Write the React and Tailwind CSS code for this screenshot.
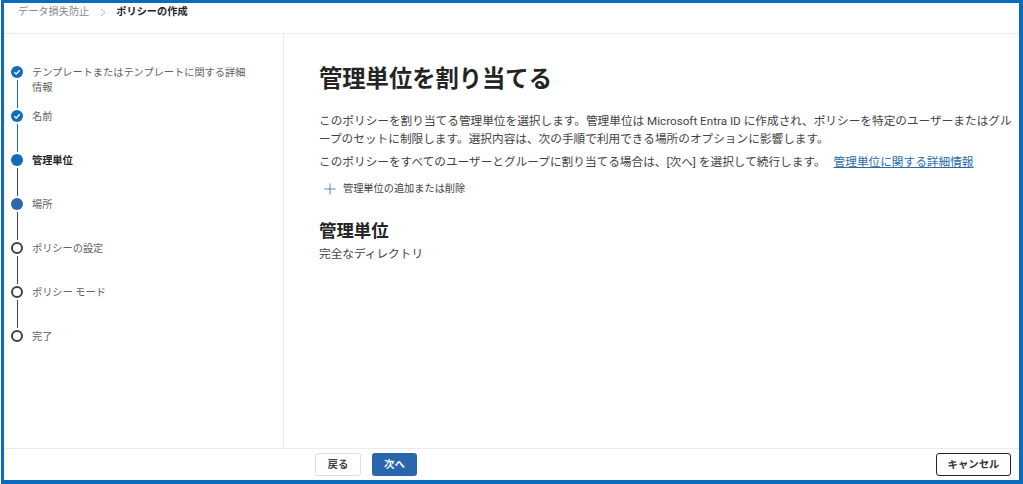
import React from 'react';
import { Plus } from 'lucide-react';

const font = "font-['Roboto','Noto_Sans_CJK_JP',sans-serif]";

const steps = [
  { label: 'テンプレートまたはテンプレートに関する詳細情報', state: 'done', line: 'blue' },
  { label: '名前', state: 'done', line: 'blue' },
  { label: '管理単位', state: 'current', line: 'dark' },
  { label: '場所', state: 'filled', line: 'dark' },
  { label: 'ポリシーの設定', state: 'todo', line: 'dark' },
  { label: 'ポリシー モード', state: 'todo', line: 'dark' },
  { label: '完了', state: 'todo' },
];

function StepDot({ state }) {
  if (state === 'done') {
    return (
      <span className="w-3 h-3 rounded-full bg-[#0f6cbd] flex items-center justify-center shrink-0">
        <svg width="8" height="8" viewBox="0 0 8 8" fill="none">
          <path d="M1.2 4.2 L3.2 6 L6.8 2.2" stroke="white" strokeWidth="1.3" />
        </svg>
      </span>
    );
  }
  if (state === 'current') return <span className="w-3 h-3 rounded-full bg-[#0f6cbd] shrink-0" />;
  if (state === 'filled') return <span className="w-3 h-3 rounded-full bg-[#2b66ad] shrink-0" />;
  return <span className="w-3 h-3 rounded-full border-2 border-[#424242] bg-white shrink-0" />;
}

function Step({ step }) {
  return (
    <li className="flex h-11 gap-[9px]">
      <div className="w-3 flex flex-col items-center shrink-0">
        <StepDot state={step.state} />
        {step.line && (
          <span className={`w-px flex-1 my-[2px] ${step.line === 'blue' ? 'bg-[#0f6cbd]' : 'bg-[#424242]'}`} />
        )}
      </div>
      <span
        className={`text-[10.2px] leading-[15px] -mt-[1px] ${
          step.state === 'current' ? 'font-bold text-[#242424]' : 'text-[#616161]'
        }`}
      >
        {step.label}
      </span>
    </li>
  );
}

export default function App() {
  return (
    <div className="w-[1023px] h-[484px] bg-white pl-px">
      <div className={`h-full border-[#0a6cbd] border-l-[3px] border-t-[3px] border-r-4 border-b-4 bg-white flex flex-col overflow-hidden ${font}`}>
        <header className="h-[31px] shrink-0 border-b border-[#edebe9] flex items-start pl-[14px] pt-[1px] text-[10.2px] leading-[16px]">
          <span className="text-[#8a8886]">データ損失防止</span>
          <span className="ml-[11px] mr-[10px]">
            <svg width="6" height="16" viewBox="0 0 6 16" fill="none">
              <path d="M1 5 L5 8.5 L1 12" stroke="#a19f9d" strokeWidth="0.8" />
            </svg>
          </span>
          <span className="font-bold text-[#242424]">ポリシーの作成</span>
        </header>

        <div className="flex flex-1 min-h-0">
          <aside className="w-[280px] shrink-0 border-r border-[#edebe9] pl-[7px] pr-[32px] pt-[32px]">
            <ol>
              {steps.map((s) => (
                <Step key={s.label} step={s} />
              ))}
            </ol>
          </aside>

          <main className="flex-1 pl-[35px] pt-[29px] text-[#424242]">
            <h1 className="text-[23.3px] leading-[32px] font-bold text-[#242424]">管理単位を割り当てる</h1>
            <p className="mt-[17px] text-[11.67px] leading-[18px]">
              このポリシーを割り当てる管理単位を選択します。管理単位は Microsoft Entra ID に作成され、ポリシーを特定のユーザーまたはグループのセットに制限します。選択内容は、次の手順で利用できる場所のオプションに影響します。
            </p>
            <p className="mt-[5px] text-[11.67px] leading-[18px]">
              このポリシーをすべてのユーザーとグループに割り当てる場合は、[次へ] を選択して続行します。
              <a className="ml-[8px] text-[#2b6ca8] underline">管理単位に関する詳細情報</a>
            </p>
            <button className="mt-[9px] ml-[2px] flex items-center gap-[4px] text-[10.2px] leading-[16px] text-[#424242]">
              <Plus size={18} strokeWidth={1} className="text-[#2b66ad]" />
              管理単位の追加または削除
            </button>
            <h2 className="mt-[20px] text-[17.4px] leading-[26px] font-bold text-[#242424]">管理単位</h2>
            <p className="mt-px text-[11.67px] leading-[18px]">完全なディレクトリ</p>
          </main>
        </div>

        <footer className="h-[32px] shrink-0 border-t border-[#edebe9] flex items-center pl-[311px] pr-[8px] gap-[11px] text-[10.4px]">
          <button className="w-[46px] h-[23px] rounded-[3px] border border-[#e1dfdd] font-bold text-[#424242]">戻る</button>
          <button className="w-[45px] h-[23px] rounded-[3px] bg-[#2b66ad] font-bold text-white">次へ</button>
          <button className="ml-auto w-[75px] h-[23px] rounded-[3px] border border-[#242424] font-bold text-[#333333]">キャンセル</button>
        </footer>
      </div>
    </div>
  );
}
